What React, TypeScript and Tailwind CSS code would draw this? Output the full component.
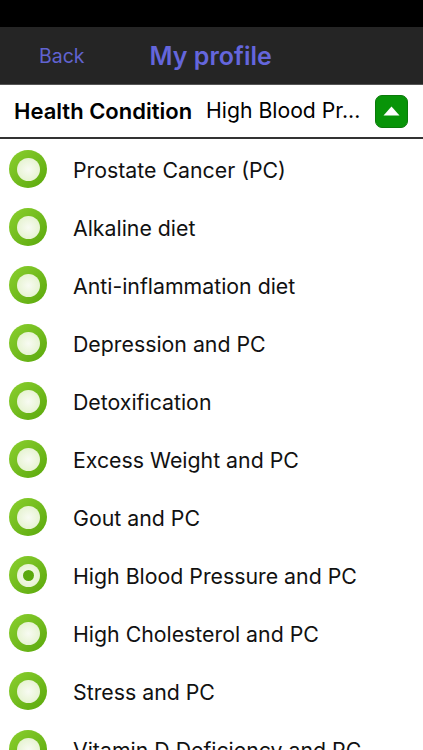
const conditions = [
  "Prostate Cancer (PC)",
  "Alkaline diet",
  "Anti-inflammation diet",
  "Depression and PC",
  "Detoxification",
  "Excess Weight and PC",
  "Gout and PC",
  "High Blood Pressure and PC",
  "High Cholesterol and PC",
  "Stress and PC",
  "Vitamin D Deficiency and PC",
];

const selected = "High Blood Pressure and PC";

function Radio({ checked }: { checked: boolean }) {
  return (
    <div className="flex h-[38px] w-[38px] shrink-0 items-center justify-center rounded-full bg-gradient-to-br from-[#8bd02e] to-[#5aa808]">
      <div className="flex h-[23px] w-[23px] items-center justify-center rounded-full bg-radial from-[#f8fbf2] to-[#e0f0c6]">
        {checked && <div className="h-[11px] w-[11px] rounded-full bg-[#5ba80e]" />}
      </div>
    </div>
  );
}

export default function App() {
  return (
    <div className="flex h-[750px] w-[423px] flex-col overflow-hidden bg-white font-['Inter',sans-serif] text-black">
      <div className="h-[27px] shrink-0 bg-black" />
      <div className="flex h-[58px] shrink-0 items-center border-b border-[#555] bg-[#252525] pt-[2px]">
        <span className="ml-[39px] text-[19.5px] text-[#6163d0]">Back</span>
        <span className="ml-[65px] text-[25px] font-semibold text-[#6466dc]">My profile</span>
      </div>
      <div className="flex h-[54px] shrink-0 items-center border-b-2 border-[#333]">
        <span className="ml-[14px] text-[22px] font-semibold whitespace-nowrap">Health Condition</span>
        <span className="ml-[14px] text-[21.2px] whitespace-nowrap">High Blood Pr...</span>
        <div className="ml-[15px] flex h-[33px] w-[33px] items-center justify-center rounded-[7px] border border-[#0b7a0b] bg-[#089408]">
          <svg width="17" height="10" viewBox="0 0 17 10">
            <path d="M8.5 0.5L16.5 9.5H0.5Z" fill="#fff" />
          </svg>
        </div>
      </div>
      <div className="flex flex-col pt-[1px]">
        {conditions.map((name) => (
          <div key={name} className="flex h-[58px] shrink-0 items-center pl-[9px]">
            <Radio checked={name === selected} />
            <span className="ml-[26px] pt-[4px] text-[21.3px] whitespace-nowrap text-[#111]">{name}</span>
          </div>
        ))}
      </div>
    </div>
  );
}
